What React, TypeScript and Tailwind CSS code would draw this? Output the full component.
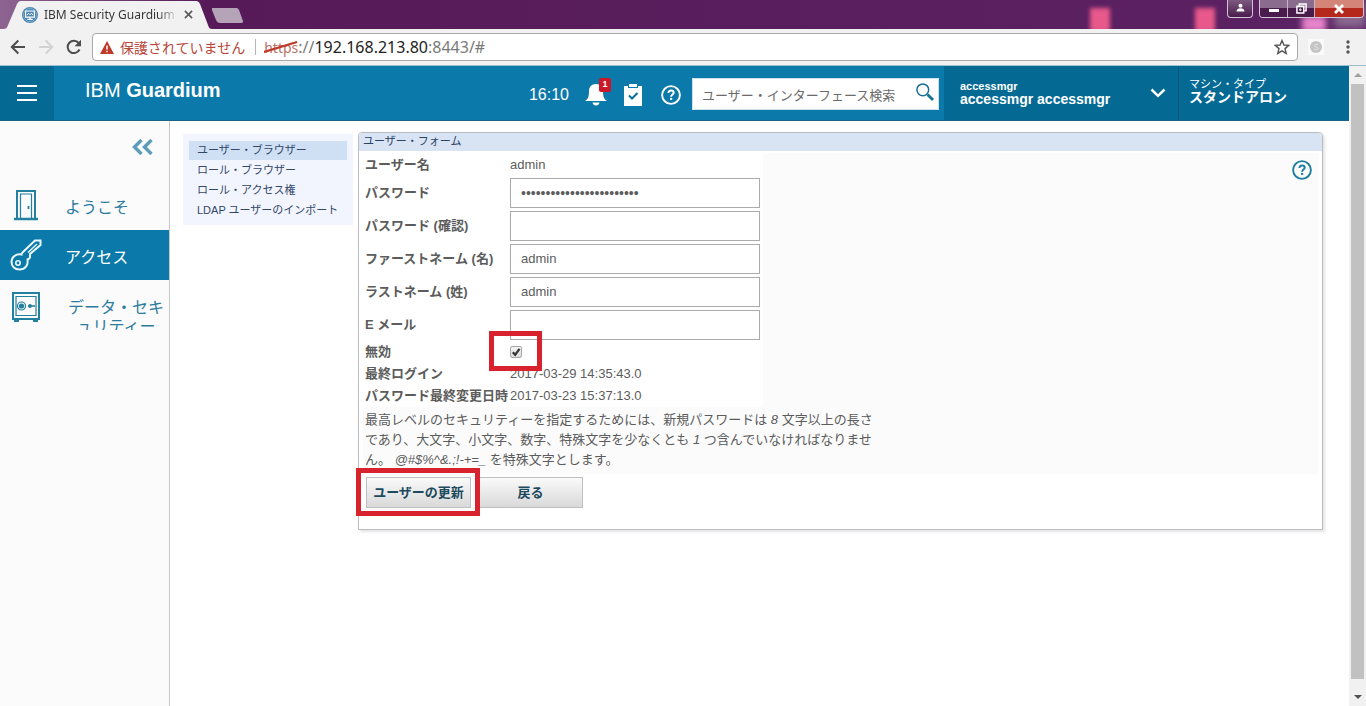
import type { ReactNode } from "react";
import clsx from "clsx";

const menuItems = [
  "ユーザー・ブラウザー",
  "ロール・ブラウザー",
  "ロール・アクセス権",
  "LDAP ユーザーのインポート",
];

const fields = [
  { id: "password", label: "パスワード", type: "password", value: "************************" },
  { id: "confirm", label: "パスワード (確認)", type: "password", value: "" },
  { id: "first", label: "ファーストネーム (名)", type: "text", value: "admin" },
  { id: "last", label: "ラストネーム (姓)", type: "text", value: "admin" },
  { id: "email", label: "E メール", type: "email", value: "" },
];

function HelpIcon({ className }: { className?: string }) {
  return (
    <svg viewBox="0 0 20 20" className={clsx("size-5", className)} fill="none" stroke="currentColor">
      <circle cx="10" cy="10" r="8.9" strokeWidth="1.9" />
      <path d="M7.4 8.1c0-1.6 1.1-2.5 2.7-2.5s2.6.9 2.6 2.2c0 1.8-2.6 1.8-2.6 4" strokeWidth="2" />
      <path d="M10.1 12.9v2" strokeWidth="2.2" />
    </svg>
  );
}

function TabStrip() {
  return (
    <div className="relative flex h-[29px] items-start overflow-hidden bg-linear-to-r from-[#8d6491] via-[#571a58] via-15% to-[#5b2263]">
      <div className="absolute top-2 right-[256px] h-6 w-5 bg-[#e8588b] blur-[2px]" />
      <div className="absolute top-2 right-[151px] h-6 w-5 bg-[#e8588b] blur-[2px]" />
      <div className="absolute top-4 right-10 h-4 w-6 bg-[#e884cc] blur-[3px]" />
      <div className="absolute top-0 right-0 h-7 w-8 bg-[#8a6a90] blur-[4px]" />

      <div className="relative flex h-full w-[212px] items-center pl-[22px]">
        <svg viewBox="0 0 212 29" className="absolute inset-0 h-full w-full" preserveAspectRatio="none">
          <path d="M0 29h3c3 0 4-1 5-4L17 4c1-2 2-3 4-3h175c2 0 3 1 4 3l8 21c1 3 2 4 4 4z" fill="#f2f1f2" />
        </svg>
        <svg viewBox="0 0 16 16" className="relative size-4 shrink-0">
          <circle cx="8" cy="8" r="8" fill="#4d86b3" />
          <circle cx="8" cy="8" r="6.6" fill="none" stroke="#7fb0d3" strokeWidth=".8" />
          <path d="M3.6 4h8.8v6.2H3.6zM8 10.2v2M5.3 12.4h5.4" fill="none" stroke="#fff" strokeWidth="1.2" />
          <path d="M5 8l1.6-1.6L8 7.8l1.4-1.6L11 8" fill="none" stroke="#fff" strokeWidth=".9" />
        </svg>
        <span className="relative ml-1.5 w-[134px] overflow-hidden bg-linear-to-r from-[#333] from-85% to-transparent bg-clip-text font-['Noto_Sans','Noto_Sans_CJK_JP',sans-serif] text-[12px] whitespace-nowrap text-transparent">
          IBM Security Guardium
        </span>
        <button aria-label="タブを閉じる" className="relative ml-1.5">
          <svg viewBox="0 0 10 10" className="size-[9px]" stroke="#5a5a5a" strokeWidth="1.8">
            <path d="M1 1l8 8M9 1L1 9" />
          </svg>
        </button>
      </div>
      <button aria-label="新しいタブ" className="mt-2 h-[15px]">
        <svg viewBox="0 0 32 15" className="h-[15px] w-8">
          <path d="M0 0h23c2 0 3 0 4 2l4 11c0 1 0 2-2 2H8c-2 0-3-1-4-3L0 2z" fill="#b5a4b8" />
        </svg>
      </button>

      <div className="relative ml-auto flex">
        <button
          aria-label="ユーザー"
          className="mr-1.5 flex h-[18px] w-[26px] items-center justify-center rounded-b border border-t-0 border-[#d5c3d8] bg-linear-to-b from-[#7c5a80] to-[#4a1c4c]"
        >
          <svg viewBox="0 0 10 10" className="mb-0.5 size-[9px]" fill="#fff">
            <circle cx="5" cy="3" r="2.2" />
            <path d="M.5 9.5c0-5 9-5 9 0z" />
          </svg>
        </button>
        <div className="mr-0.5 flex h-[18px] overflow-hidden rounded-b border border-t-0 border-[#d5c3d8]">
          <button aria-label="最小化" className="flex w-7 items-center justify-center border-r border-[#c5b1c8] bg-linear-to-b from-[#8a6d8e] from-50% to-[#4a1c4c] to-50%">
            <span className="mt-1 h-[3px] w-2.5 bg-white" />
          </button>
          <button aria-label="元に戻す" className="flex w-[27px] items-center justify-center border-r border-[#c5b1c8] bg-linear-to-b from-[#8a6d8e] from-50% to-[#4a1c4c] to-50%">
            <svg viewBox="0 0 12 12" className="size-[11px]" fill="none" stroke="#fff" strokeWidth="1.6">
              <path d="M3.5 3V1h7.5v7.5H9" />
              <path d="M1 3.5h7.5V11H1z" />
              <path d="M4 6.5h1.5v1.5H4z" strokeWidth="1" />
            </svg>
          </button>
          <button aria-label="閉じる" className="flex w-12 items-center justify-center bg-linear-to-b from-[#d58478] from-50% to-[#b5291c] to-50%">
            <svg viewBox="0 0 12 10" className="h-2.5 w-3" stroke="#fff" strokeWidth="2.8">
              <path d="M2 1l8 8M10 1L2 9" />
            </svg>
          </button>
        </div>
      </div>
    </div>
  );
}

function Toolbar() {
  return (
    <div className="flex h-[37px] items-center border-b border-[#9cc0d0] bg-[#f2f1f2] pr-[13px] pl-2.5">
      <button aria-label="戻る">
        <svg viewBox="0 0 16 16" className="size-4" fill="none" stroke="#4d4d4d" strokeWidth="2">
          <path d="M15 8H2M8.3 1.5L1.8 8l6.5 6.5" />
        </svg>
      </button>
      <button aria-label="進む" className="ml-3">
        <svg viewBox="0 0 16 16" className="size-4" fill="none" stroke="#d2d2d2" strokeWidth="2">
          <path d="M1 8h13M7.7 1.5L14.2 8l-6.5 6.5" />
        </svg>
      </button>
      <button aria-label="再読み込み" className="ml-3">
        <svg viewBox="0 0 16 16" className="size-4" fill="none" stroke="#4d4d4d" strokeWidth="2">
          <path d="M13.5 10.5A6.2 6.2 0 1 1 12.7 4" />
          <path d="M15 .8v6.4H8.6z" fill="#4d4d4d" stroke="none" />
        </svg>
      </button>
      <div className="ml-2.5 flex h-7 flex-1 items-center rounded-sm border border-[#a9a9a9] bg-white px-[7px] font-['Noto_Sans','Noto_Sans_CJK_JP',sans-serif] text-[14px]">
        <svg viewBox="0 0 14 13" className="h-[13px] w-3.5 shrink-0">
          <path d="M7 0l7 13H0z" fill="#bf3a2b" />
          <path d="M7 4.5v4M7 9.7v1.5" stroke="#fff" strokeWidth="1.5" />
        </svg>
        <span className="ml-1.5 text-[#b8463a]">保護されていません</span>
        <span className="mr-2 ml-2.5 h-4 w-px bg-[#b5b5b5]" />
        <span className="relative text-[#b8726a]">
          https
          <svg viewBox="0 0 36 12" className="absolute top-1 left-0 h-3 w-full" preserveAspectRatio="none">
            <path d="M0 11L35 1" stroke="#bf3a2b" strokeWidth="2.2" />
          </svg>
        </span>
        <span className="text-[16px] leading-5 text-[#7a7a7a]">
          ://<span className="text-[#222]">192.168.213.80</span>:8443/#
        </span>
        <button aria-label="ブックマーク" className="ml-auto">
          <svg viewBox="0 0 16 16" className="size-4" fill="none" stroke="#555" strokeWidth="1.4">
            <path d="M8 1.5l1.9 4.5 4.8.4-3.7 3.2 1.2 4.8L8 11.800l-4.200 2.600L5 9.600 1.300 6.400l4.800-.4z" />
          </svg>
        </button>
      </div>
      <span className="ml-2.5 flex size-4 items-center justify-center bg-[#fafafa]">
        <svg viewBox="0 0 12 12" className="size-3">
          <circle cx="6" cy="6" r="6" fill="#c4c4c4" />
          <path d="M8 4C7 3 4.5 3 4.5 4.500S8 6 8 7.500 5 9 4 8" fill="none" stroke="#e6e6e6" />
        </svg>
      </span>
      <button aria-label="メニュー" className="ml-[19px]">
        <svg viewBox="0 0 10 14" className="h-3.5 w-2.5" fill="#555">
          <circle cx="5" cy="2" r="1.7" />
          <circle cx="5" cy="7" r="1.7" />
          <circle cx="5" cy="12" r="1.7" />
        </svg>
      </button>
    </div>
  );
}

function AppHeader() {
  return (
    <header className="flex h-[55px] border-b border-[#1b6389] bg-[#0b79a9] text-white">
      <button aria-label="ナビゲーション" className="flex w-[54px] items-center justify-center bg-[#046a94]">
        <svg viewBox="0 0 20 16" className="h-4 w-5" stroke="#fff" strokeWidth="2">
          <path d="M0 1h20M0 8h20M0 15h20" />
        </svg>
      </button>
      <h1 className="mt-2.5 ml-[31px] text-xl">
        IBM <b>Guardium</b>
      </h1>
      <div className="ml-auto flex items-center">
        <span className="mt-1 mr-4 text-base">16:10</span>
        <button aria-label="通知" className="relative mt-1 mr-[17px]">
          <svg viewBox="0 0 22 22" className="size-[22px]" fill="#fff">
            <path d="M11 0c4.5 0 7 3 7 7 0 6 1 8 4 10H0c3-2 4-4 4-10 0-4 2.5-7 7-7zM7.5 18.5h7c-.5 4-6.5 4-7 0z" />
          </svg>
          <span className="absolute -top-1.5 -right-1 flex h-3.5 w-3 items-center justify-center rounded-xs bg-[#cb1728] text-[9px] font-bold">
            1
          </span>
        </button>
        <button aria-label="タスク" className="mt-1 mr-[19px]">
          <svg viewBox="0 0 18 22" className="h-[22px] w-[18px]">
            <path d="M0 2h4v2h10V2h4v20H0z" fill="#fff" />
            <path d="M5 0h8v3H5z" fill="#fff" />
            <path d="M5 11.5l3 3 5.500-5.500" fill="none" stroke="#0b6d98" strokeWidth="2" />
          </svg>
        </button>
        <button aria-label="ヘルプ" className="mt-1 mr-[11px]">
          <HelpIcon />
        </button>
        <label className="mt-0.5 mr-[5px] flex h-8 w-[247px] items-center border border-[#cde3ec] bg-white pr-1 pl-[9px]">
          <input
            aria-label="検索"
            placeholder="ユーザー・インターフェース検索"
            className="min-w-0 flex-1 pt-1 text-[13px] text-[#555] outline-none placeholder:text-[#6b6b6b]"
          />
          <svg viewBox="0 0 18 18" className="mb-1 size-[18px]" fill="none" stroke="#1a6f96">
            <circle cx="6.8" cy="6.8" r="5.9" strokeWidth="1.5" />
            <path d="M11.5 11.5l5.500 5.500" strokeWidth="2.8" />
          </svg>
        </label>
      </div>
      <button className="flex w-[235px] items-center justify-between border-r border-[#0b5578] bg-[#046a94] pr-3 pl-4 text-left">
        <span>
          <span className="block text-[11px] leading-[12px] font-bold">accessmgr</span>
          <span className="block text-[14px] leading-[15px] font-bold">accessmgr accessmgr</span>
        </span>
        <svg viewBox="0 0 16 10" className="h-2.5 w-4" fill="none" stroke="#fff" strokeWidth="2.5">
          <path d="M1.5 1.5L8 7.800l6.500-6.300" />
        </svg>
      </button>
      <div className="w-[170px] bg-[#046a94] pt-3 pl-2.5">
        <p className="text-[11px] leading-[12px]">マシン・タイプ</p>
        <p className="text-[14px] leading-[15px] font-bold">スタンドアロン</p>
      </div>
    </header>
  );
}

const doorIcon = (
  <svg viewBox="0 0 24 32" className="h-8 w-6" fill="none" stroke="#23809f">
    <path d="M3 29V2h18v27" strokeWidth="2" />
    <path d="M6.5 29V5h11v24" strokeWidth="1.2" />
    <path d="M0 30h24" strokeWidth="2.5" />
    <path d="M14.5 17v3" strokeWidth="1.8" />
  </svg>
);

const keyIcon = (
  <svg viewBox="0 0 32 32" className="size-8" fill="none" stroke="#eafaff" strokeWidth="2">
    <path d="M30.500 1.500h-5.500L13 13c-1 1-1.500 1.500-1.500 2.500C6 14.500 1.500 18 1.500 23c0 4.500 3.500 7.500 8 7.500 5.500 0 9-4.500 8-10 1.500-.5 2.500-1 2.500-2.500v-3L30.500 6z" />
    <path d="M18 13.500L27 5" strokeWidth="1.400" />
    <circle cx="8" cy="24" r="2.200" strokeWidth="1.600" />
  </svg>
);

const safeIcon = (
  <svg viewBox="0 0 28 30" className="mt-[3px] h-[30px] w-7" fill="none" stroke="#23809f">
    <path d="M1 1h26v26H1z" strokeWidth="2" />
    <path d="M4 4.5h20v19H4z" strokeWidth="1.2" />
    <path d="M2 28.8h5M21 28.8h5" strokeWidth="2.4" />
    <circle cx="9.5" cy="14" r="4" strokeWidth="1.2" />
    <circle cx="9.5" cy="14" r="2.6" fill="#23809f" stroke="none" />
    <path d="M16 14h7" strokeWidth="1.6" />
    <circle cx="18" cy="14" r="1.9" fill="#23809f" stroke="none" />
  </svg>
);

function NavItem({ icon, active, children }: { icon: ReactNode; active?: boolean; children: ReactNode }) {
  return (
    <a
      href="#"
      className={clsx(
        "flex h-[50px] overflow-hidden text-base leading-[19px]",
        active ? "bg-[#0b79a9] text-white" : "text-[#2b7b9d]"
      )}
    >
      <span className="flex w-[52px] shrink-0 items-center justify-center">{icon}</span>
      <span className="mt-[18px] ml-[13px] whitespace-nowrap">{children}</span>
    </a>
  );
}

function Sidebar() {
  return (
    <nav className="w-[170px] shrink-0 border-r border-[#c6c9ca] bg-[#fbfbfb]">
      <div className="flex h-[59px] justify-end pt-[18px] pr-4">
        <button aria-label="折りたたむ" className="h-4">
          <svg viewBox="0 0 21 16" className="h-4 w-[21px]" fill="none" stroke="#5b9db8" strokeWidth="3.4">
            <path d="M9.5 1L2.5 8l7 7M19.5 1l-7 7 7 7" />
          </svg>
        </button>
      </div>
      <NavItem icon={doorIcon}>ようこそ</NavItem>
      <NavItem icon={keyIcon} active>
        アクセス
      </NavItem>
      <NavItem icon={safeIcon}>
        <span className="block pl-[3px] text-center">
          データ・セキ
          <br />
          ュリティー
        </span>
      </NavItem>
    </nav>
  );
}

function UserForm() {
  return (
    <section className="mt-[11px] mr-[26px] ml-[5px] flex-1 self-start rounded-t-sm border border-[#b9bdc2] bg-white shadow-[2px_2px_3px_#e4e4e4]">
      <h2 className="h-[18px] rounded-t-sm bg-[#d8e4f4] pl-1 text-[11px] leading-[17px] text-[#2c4264]">
        ユーザー・フォーム
      </h2>
      <form className="px-1 pt-0.5 pb-[21px]" onSubmit={(e) => e.preventDefault()}>
        <div className="relative bg-[#fbfbfb] pb-1 text-[13px] text-[#5c5c5c]">
          <button type="button" aria-label="ヘルプ" className="absolute top-[7px] right-1.5 text-[#1f7f9f]">
            <HelpIcon />
          </button>
          <div className="grid w-[400px] grid-cols-[145px_250px] items-center bg-white pt-px pl-0.5">
            <span className="leading-[22px] font-bold">ユーザー名</span>
            <span>admin</span>
            {fields.map((f) => (
              <div key={f.id} className="col-span-2 grid h-[33px] grid-cols-subgrid items-center">
                <label htmlFor={f.id} className="font-bold whitespace-nowrap">
                  {f.label}
                </label>
                <input
                  id={f.id}
                  type={f.type}
                  defaultValue={f.value}
                  className={clsx(
                    "h-[30px] border border-[#ababab] bg-white px-2.5 outline-none",
                    f.type === "password" && "text-[14px]"
                  )}
                />
              </div>
            ))}
            <label htmlFor="disabled" className="leading-[22px] font-bold">
              無効
            </label>
            <span className="relative z-10 flex items-center">
              <input
                id="disabled"
                type="checkbox"
                defaultChecked
                className="peer size-3 appearance-none rounded-xs border border-[#a8a8a8] bg-linear-to-b from-[#f2f2f2] to-[#dcdcdc]"
              />
              <svg
                viewBox="0 0 12 12"
                className="pointer-events-none absolute left-0 hidden size-3 peer-checked:block"
                fill="none"
                stroke="#333"
                strokeWidth="2.2"
              >
                <path d="M2.8 6.2l2.4 2.600 4.300-6" />
              </svg>
              <span className="pointer-events-none absolute -top-[15px] -left-[21px] h-10 w-[53px] border-5 border-[#d8232e]" />
            </span>
            <span className="leading-[22px] font-bold">最終ログイン</span>
            <span>2017-03-29 14:35:43.0</span>
            <span className="leading-[22px] font-bold whitespace-nowrap">パスワード最終変更日時</span>
            <span>2017-03-23 15:37:13.0</span>
          </div>
          <p className="mt-[3px] pl-0.5 leading-5">
            最高レベルのセキュリティーを指定するためには、新規パスワードは <i>8</i> 文字以上の長さ
            <br />
            であり、大文字、小文字、数字、特殊文字を少なくとも <i>1</i> つ含んでいなければなりませ
            <br />
            ん。 <i>@#$%^&amp;.;!-+=_</i> を特殊文字とします。
          </p>
        </div>
        <div className="mt-[3px] ml-[3px] flex gap-[7px] text-[13px] font-bold text-[#1c4a5e]">
          <div className="relative">
            <button
              type="submit"
              className="h-[31px] w-[105px] border border-[#bfbfbf] bg-linear-to-b from-[#fafafa] to-[#d9d9d9]"
            >
              ユーザーの更新
            </button>
            <span className="pointer-events-none absolute -top-[9px] -left-2.5 z-10 h-12 w-[124px] border-5 border-[#d8232e]" />
          </div>
          <button
            type="button"
            className="h-[31px] w-[105px] border border-[#bfbfbf] bg-linear-to-b from-[#fafafa] to-[#d9d9d9]"
          >
            戻る
          </button>
        </div>
      </form>
    </section>
  );
}

function ScrollTrack() {
  return (
    <div className="flex w-[17px] shrink-0 flex-col items-center bg-[#f1f1f1]">
      <svg viewBox="0 0 8 4" className="my-[7px] h-1 w-2" fill="#a0a0a0">
        <path d="M0 4l4-4 4 4z" />
      </svg>
      <div className="w-[13px] flex-1 bg-[#c1c1c1]" />
      <svg viewBox="0 0 8 4" className="mt-4 mb-[7px] h-1 w-2" fill="#505050">
        <path d="M0 0l4 4 4-4z" />
      </svg>
    </div>
  );
}

export default function App() {
  return (
    <div className="flex min-h-screen flex-col bg-white font-['Liberation_Sans','Noto_Sans_CJK_JP',sans-serif]">
      <TabStrip />
      <Toolbar />
      <div className="flex flex-1">
        <div className="flex min-w-0 flex-1 flex-col">
          <AppHeader />
          <div className="flex flex-1">
            <Sidebar />
            <ul className="mt-[13px] ml-[13px] w-[170px] shrink-0 self-start bg-[#f2f5fd] px-1.5 pt-[7px] pb-1 text-[11px] leading-[19px]">
              {menuItems.map((item, i) => (
                <li key={item} className="pb-px">
                  <a
                    href="#"
                    className={clsx("block pl-2 whitespace-nowrap text-[#34486a]", i === 0 && "bg-[#cfe0f5]")}
                  >
                    {item}
                  </a>
                </li>
              ))}
            </ul>
            <UserForm />
          </div>
        </div>
        <ScrollTrack />
      </div>
    </div>
  );
}
